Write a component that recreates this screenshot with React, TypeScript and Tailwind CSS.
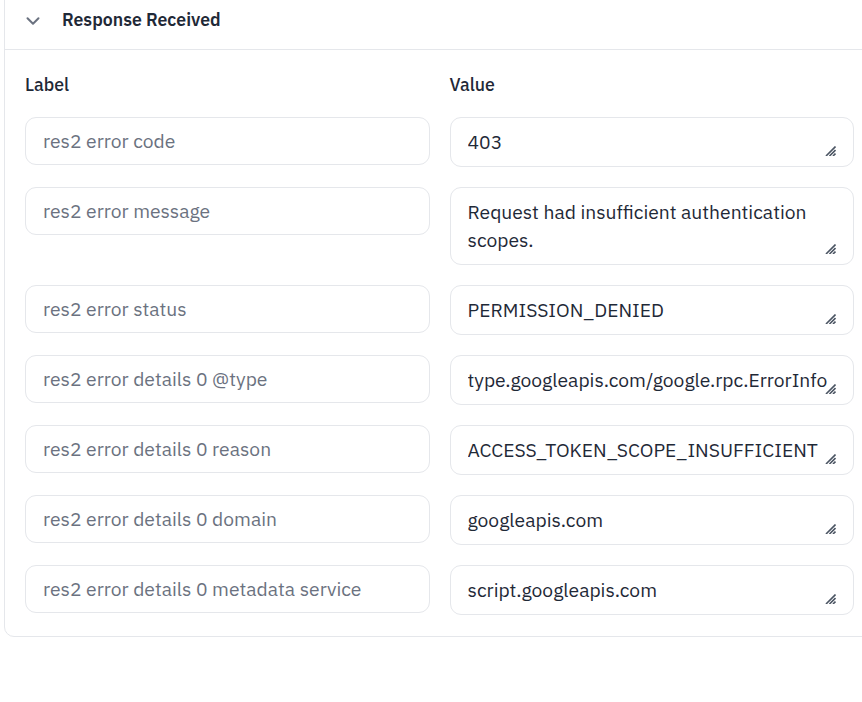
import { ChevronDown } from "lucide-react";

type Field = {
  label: string;
  value: string;
  lines?: number;
};

const fields: Field[] = [
  { label: "res2 error code", value: "403" },
  { label: "res2 error message", value: "Request had insufficient authentication scopes.", lines: 2 },
  { label: "res2 error status", value: "PERMISSION_DENIED" },
  { label: "res2 error details 0 @type", value: "type.googleapis.com/google.rpc.ErrorInfo" },
  { label: "res2 error details 0 reason", value: "ACCESS_TOKEN_SCOPE_INSUFFICIENT" },
  { label: "res2 error details 0 domain", value: "googleapis.com" },
  { label: "res2 error details 0 metadata service", value: "script.googleapis.com" },
];

// hatched corner handle shown on the value boxes
const ResizeGrip = () => (
  <svg width="11" height="10" viewBox="0 0 11 10" className="pointer-events-none absolute bottom-0 right-0">
    <path d="M1 10 L10.5 0.5 M4.5 10 L10.5 4 M8 10 L10.5 7.5" stroke="#4b5563" strokeWidth="1.6" />
  </svg>
);

const FieldRow = ({ field }: { field: Field }) => (
  <div className="grid grid-cols-2 gap-[20px] items-start">
    <input
      readOnly
      value={field.label}
      className="h-[48px] w-full rounded-[11px] border border-[#e5e7eb] bg-white px-[17px] text-[19.3px] text-[#6b7280] outline-none"
    />
    <div className="rounded-[11px] border border-[#e5e7eb] bg-white px-[17px] py-[10px]">
      <div className="relative">
        <textarea
          readOnly
          value={field.value}
          className={`block w-full resize-none overflow-hidden bg-transparent text-[19.3px] leading-[28px] text-[#1f2937] outline-none ${
            field.lines === 2 ? "h-[56px] whitespace-pre-wrap" : "h-[28px] whitespace-nowrap"
          }`}
        />
        <ResizeGrip />
      </div>
    </div>
  </div>
);

export default function App() {
  return (
    <div
      className="h-[702px] w-[862px] overflow-hidden bg-white"
      style={{ fontFamily: '"IBM Plex Sans", Roboto, "Liberation Sans", sans-serif' }}
    >
      <div className="-mt-[10px] ml-[4px] w-[871px] rounded-[10px] border border-[#e5e7eb]">
        <div className="flex h-[59px] items-center border-b border-[#e5e7eb] pl-[17px] pt-[1px]">
          <ChevronDown size={22} strokeWidth={2.2} className="text-[#6b7280]" />
          <span className="ml-[18px] text-[17.7px] font-semibold text-[#1f2937]">Response Received</span>
        </div>
        <div className="px-[20px] pb-[21px] pt-[22px]">
          <div className="mb-[18px] grid grid-cols-2 gap-[20px] text-[17.7px] font-medium text-[#1f2937]">
            <span>Label</span>
            <span>Value</span>
          </div>
          <div className="flex flex-col gap-[20px]">
            {fields.map((f) => (
              <FieldRow key={f.label} field={f} />
            ))}
          </div>
        </div>
      </div>
    </div>
  );
}
